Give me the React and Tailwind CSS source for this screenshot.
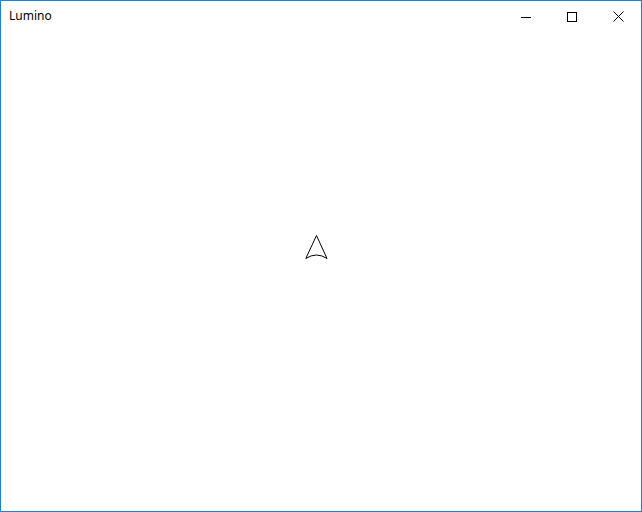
import React from 'react';

function TitleButton({ children }) {
    return (
        <div className="w-[46px] h-full flex items-center justify-center">
            {children}
        </div>
    );
}

export default function App() {
    return (
        <div className="w-[642px] h-[512px] bg-white border border-[#1883d7] flex flex-col overflow-hidden" style={{ fontFamily: '"Noto Sans", "Segoe UI", sans-serif' }}>
            {/* Title bar */}
            <div className="h-[31px] flex items-center justify-between">
                <span className="pl-[8px] pb-[1px] text-[12px] text-black leading-none">Lumino</span>
                <div className="flex h-full">
                    <TitleButton>
                        <svg width="10" height="10" viewBox="0 0 10 10">
                            <path d="M0 5.5H10" stroke="black" strokeWidth="1" />
                        </svg>
                    </TitleButton>
                    <TitleButton>
                        <svg width="10" height="10" viewBox="0 0 10 10">
                            <rect x="0.5" y="0.5" width="9" height="9" fill="none" stroke="black" strokeWidth="1" />
                        </svg>
                    </TitleButton>
                    <TitleButton>
                        <svg width="11" height="11" viewBox="0 0 11 11">
                            <path d="M0.5 0.5L10.5 10.5M10.5 0.5L0.5 10.5" stroke="black" strokeWidth="1" />
                        </svg>
                    </TitleButton>
                </div>
            </div>

            {/* Canvas */}
            <div className="flex-1 flex justify-center pt-[203px] pr-[8px]">
                <svg width="24" height="26" viewBox="0 0 24 26">
                    <path
                        d="M11.5 0.5L22 23.5Q11.5 16.5 0.8 23.5Z"
                        fill="none"
                        stroke="black"
                        strokeWidth="1"
                    />
                </svg>
            </div>
        </div>
    );
}
